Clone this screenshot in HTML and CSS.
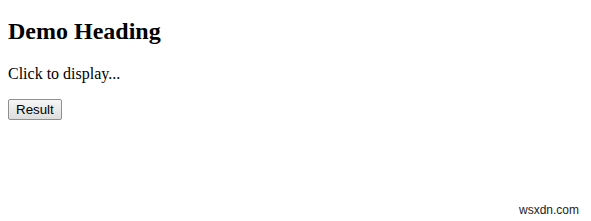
FILE: index.html
```html
<!DOCTYPE html>
<html lang="en">
<head>
    <meta charset="UTF-8">
    <meta name="viewport" content="width=device-width, initial-scale=1.0">
    <title>Demo</title>
    <link rel="stylesheet" href="styles.css">
</head>
<body>
    <h2>Demo Heading</h2>
    <p id="demo">Click to display...</p>
    <button onclick="display()" class="result_btn">Result</button>

    <span class="watermark">wsxdn.com</span>

    <script>
        function display() {
            document.getElementById("demo").innerHTML = "Clicked!";
        }
    </script>
</body>
</html>
```

FILE: styles.css
```css
body {
    margin: 8px;
    font-family: "Liberation Serif", "Times New Roman", serif;
    font-size: 16px;
    color: #000;
}

h2 {
    font-size: 24px;
    margin: 10px 0 19.92px;
}

p {
    margin: 16px 0;
}

.result_btn {
    font-family: "Liberation Sans", Arial, sans-serif;
    font-size: 13.33px;
    padding: 2px 7px;
    background: linear-gradient(#f6f6f6, #dddddd);
    border: 1px solid #8f8f8f;
    border-radius: 2px;
    color: #000;
}

.watermark {
    position: absolute;
    right: 12px;
    bottom: 4px;
    font-family: "Liberation Sans", Arial, sans-serif;
    font-size: 12px;
    color: #222;
}
```
